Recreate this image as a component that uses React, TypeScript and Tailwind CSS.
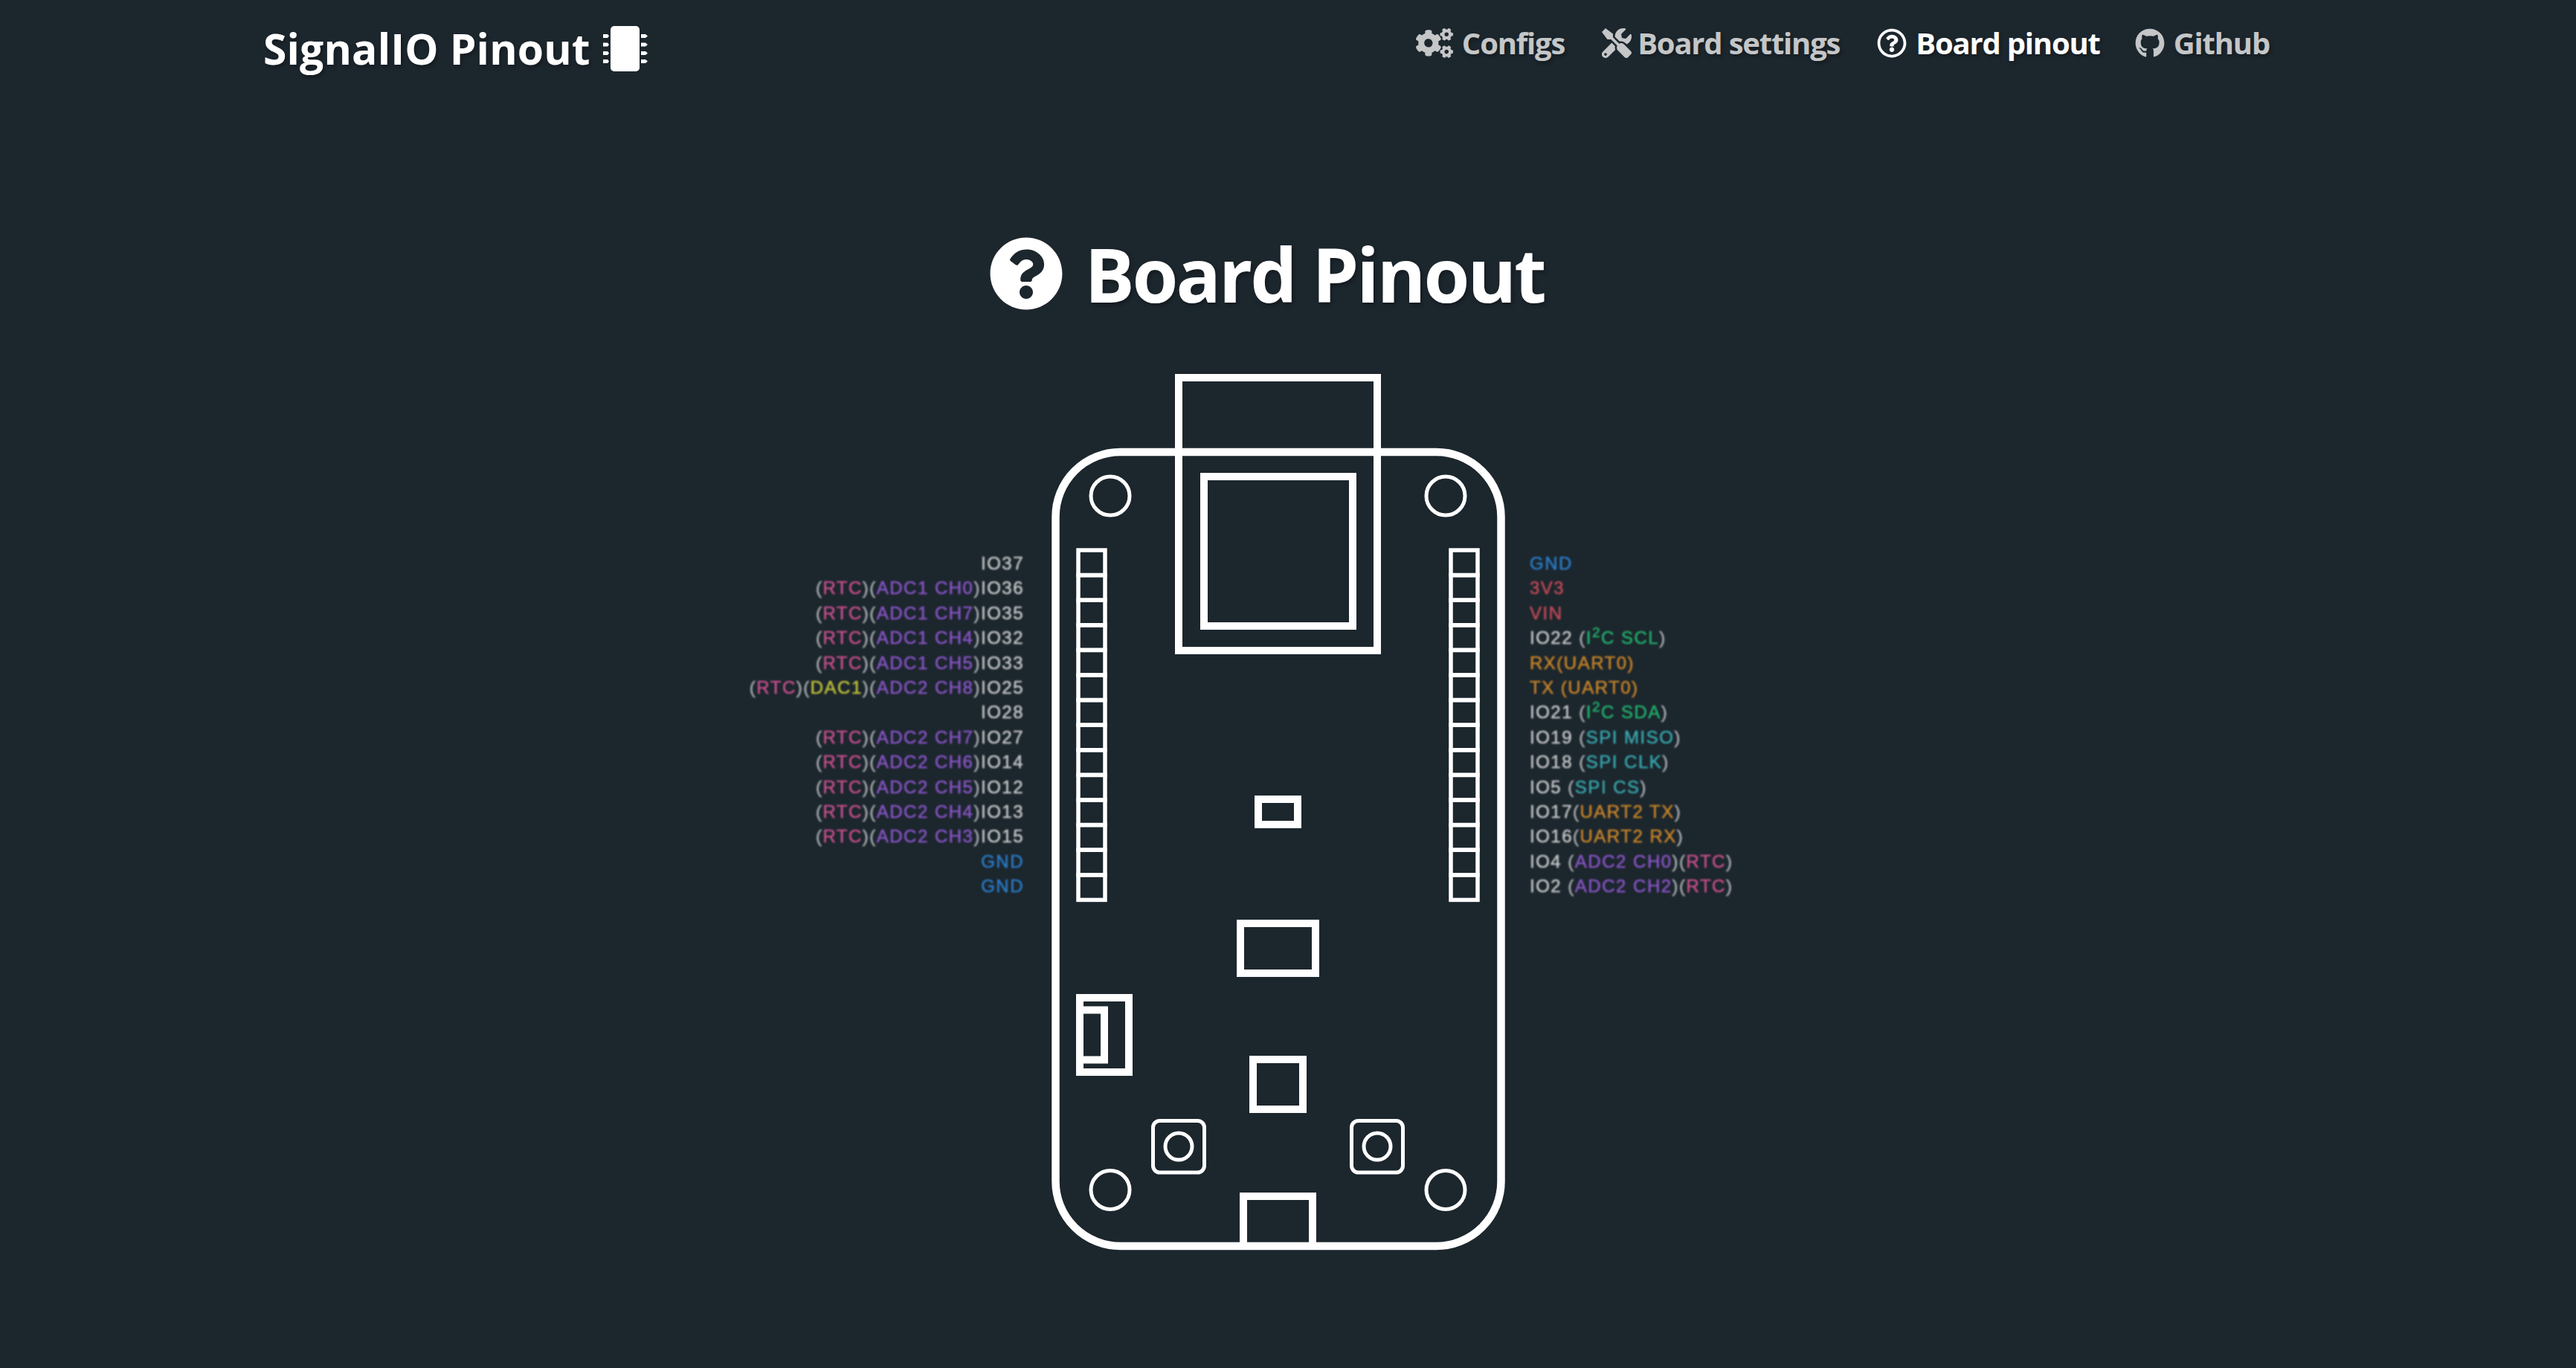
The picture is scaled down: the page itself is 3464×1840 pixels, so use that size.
import { FaCogs, FaTools, FaRegQuestionCircle, FaGithub, FaQuestionCircle } from "react-icons/fa";

const P = ({ children }: { children: React.ReactNode }) => <span className="text-[#a9adb0]">{children}</span>;
const C = ({ c, children }: { c: string; children: React.ReactNode }) => <span className={c}>{children}</span>;

const RTC = <><P>(</P><C c="text-[#c9508f]">RTC</C><P>)</P></>;
const ADC = (t: string) => <><P>(</P><C c="text-[#8a55c8]">{t}</C><P>)</P></>;
const DAC = <><P>(</P><C c="text-[#c2c23a]">DAC1</C><P>)</P></>;
const GND = <C c="text-[#2b7cc6]">GND</C>;
const I2C = (t: string) => <><P>(</P><C c="text-[#22b16c]">I<sup className="text-[19px] leading-none">2</sup>C {t}</C><P>)</P></>;
const SPI = (t: string) => <><P>(</P><C c="text-[#38a7ae]">{t}</C><P>)</P></>;
const UART2 = (t: string) => <><P>(</P><C c="text-[#c98529]">{t}</C><P>)</P></>;

const left: React.ReactNode[] = [
  <>IO37</>,
  <>{RTC}{ADC("ADC1 CH0")}IO36</>,
  <>{RTC}{ADC("ADC1 CH7")}IO35</>,
  <>{RTC}{ADC("ADC1 CH4")}IO32</>,
  <>{RTC}{ADC("ADC1 CH5")}IO33</>,
  <>{RTC}{DAC}{ADC("ADC2 CH8")}IO25</>,
  <>IO28</>,
  <>{RTC}{ADC("ADC2 CH7")}IO27</>,
  <>{RTC}{ADC("ADC2 CH6")}IO14</>,
  <>{RTC}{ADC("ADC2 CH5")}IO12</>,
  <>{RTC}{ADC("ADC2 CH4")}IO13</>,
  <>{RTC}{ADC("ADC2 CH3")}IO15</>,
  GND,
  GND,
];

const right: React.ReactNode[] = [
  GND,
  <C c="text-[#c04a57]">3V3</C>,
  <C c="text-[#c04a57]">VIN</C>,
  <>IO22 {I2C("SCL")}</>,
  <C c="text-[#c98529]">RX(UART0)</C>,
  <C c="text-[#c98529]">TX (UART0)</C>,
  <>IO21 {I2C("SDA")}</>,
  <>IO19 {SPI("SPI MISO")}</>,
  <>IO18 {SPI("SPI CLK")}</>,
  <>IO5 {SPI("SPI CS")}</>,
  <>IO17{UART2("UART2 TX")}</>,
  <>IO16{UART2("UART2 RX")}</>,
  <>IO4 {ADC("ADC2 CH0")}{RTC}</>,
  <>IO2 {ADC("ADC2 CH2")}{RTC}</>,
];

function Labels({ rows, className }: { rows: React.ReactNode[]; className: string }) {
  return (
    <div className={`flex flex-col mt-[251px] text-[24px] tracking-[1.5px] text-[#c6c8c9] blur-[0.9px] whitespace-pre [-webkit-text-stroke:0.5px] ${className}`} style={{ fontFamily: '"Liberation Sans", sans-serif' }}>
      {rows.map((r, i) => (
        <div key={i} className="h-[33.4px] leading-[33.4px]">{r}</div>
      ))}
    </div>
  );
}

function Header({ x }: { x: number }) {
  return (
    <g>
      {Array.from({ length: 14 }).map((_, i) => (
        <rect key={i} x={x} y={740 + i * 33.6} width={36} height={33.6} strokeWidth={5.5} />
      ))}
    </g>
  );
}

function Board() {
  return (
    <svg viewBox="1400 490 640 1210" width={640} height={1210} fill="none" stroke="#fff" className="ml-[23px] shrink-0 blur-[0.5px]">
      <rect x={1419.5} y={608} width={599} height={1068} rx={87} strokeWidth={10.5} />
      <rect x={1585} y={508} width={267} height={367} strokeWidth={10} />
      <rect x={1619} y={641} width={200} height={201} strokeWidth={10} />
      <circle cx={1493} cy={667} r={26} strokeWidth={5} />
      <circle cx={1944} cy={667} r={26} strokeWidth={5} />
      <circle cx={1493} cy={1600.5} r={26} strokeWidth={5} />
      <circle cx={1944} cy={1600.5} r={26} strokeWidth={5} />
      <Header x={1450} />
      <Header x={1951} />
      <rect x={1692} y={1075} width={53} height={34} strokeWidth={10} />
      <rect x={1668} y={1242} width={101} height={67} strokeWidth={10} />
      <rect x={1452} y={1342} width={66} height={100} strokeWidth={10} />
      <path d="M1452 1358.5H1485V1425.5H1452" strokeWidth={10} />
      <rect x={1685} y={1425} width={67} height={67} strokeWidth={10} />
      <rect x={1550.5} y={1507.5} width={69} height={69.5} rx={9} strokeWidth={5} />
      <circle cx={1585} cy={1542} r={18} strokeWidth={5} />
      <rect x={1817.5} y={1507.5} width={69} height={69.5} rx={9} strokeWidth={5} />
      <circle cx={1852} cy={1542} r={18} strokeWidth={5} />
      <path d="M1672 1676V1609H1765V1676" strokeWidth={10} />
    </svg>
  );
}

function ChipIcon() {
  const ys = [47.5, 59, 70.5, 81.5];
  return (
    <svg viewBox="810 34 61 61" width={61} height={61} fill="#fff" className="ml-[16px] shrink-0">
      <rect x={821} y={34} width={39} height={61} rx={5} />
      {ys.map((y) => (
        <g key={y}>
          <path d={`M811 ${y - 2.5}H817L819 ${y}L817 ${y + 2.5}H811Z`} />
          <path d={`M862 ${y - 2.5}H868L871 ${y}L868 ${y + 2.5}H862Z`} />
        </g>
      ))}
    </svg>
  );
}

const shadow = "[text-shadow:2px_3px_5px_rgba(0,0,0,0.3)]";

function NavItem({ icon, label, active, className }: { icon: React.ReactNode; label: string; active?: boolean; className?: string }) {
  return (
    <a className={`flex items-center ${className ?? "gap-[12px]"} ${active ? "text-white" : "text-[#c4c6c7]"}`}>
      {icon}
      <span>{label}</span>
    </a>
  );
}

export default function App() {
  return (
    <div className="min-h-screen h-[1840px] bg-[#1c262d] text-white overflow-hidden" style={{ fontFamily: '"Open Sans", "Noto Sans", sans-serif' }}>
      <nav className={`flex items-start justify-between pl-[354px] pr-[412px] pt-[30px] h-[120px] ${shadow}`}>
        <div className="flex items-center h-[70px]">
          <span className="text-[57px] leading-[70px] font-bold tracking-[0.15px]">SignalIO Pinout</span>
          <ChipIcon />
        </div>
        <div className="flex items-center h-[60px] -mt-[2px] text-[40px] font-bold tracking-[-1.2px]">
          <NavItem icon={<FaCogs className="text-[40px] w-[50px]" />} label="Configs" />
          <NavItem className="gap-[8px] ml-[50px]" icon={<FaTools className="text-[40px]" />} label="Board settings" />
          <NavItem className="gap-[12px] ml-[50px]" active icon={<FaRegQuestionCircle className="text-[40px]" />} label="Board pinout" />
          <NavItem className="gap-[12px] ml-[47px]" icon={<FaGithub className="text-[40px]" />} label="Github" />
        </div>
      </nav>
      <div className={`flex items-center justify-center gap-[28px] pr-[57px] mt-[198px] h-[100px] text-[100px] leading-[100px] font-bold tracking-[-3px] ${shadow}`}>
        <FaQuestionCircle className="w-[100px] h-[100px] shrink-0" />
        <h1>Board Pinout</h1>
      </div>
      <div className="flex items-start pl-[1000px] mt-[72px]">
        <Labels rows={left} className="w-[377px] text-right items-end" />
        <Board />
        <Labels rows={right} className="ml-[17px]" />
      </div>
    </div>
  );
}
